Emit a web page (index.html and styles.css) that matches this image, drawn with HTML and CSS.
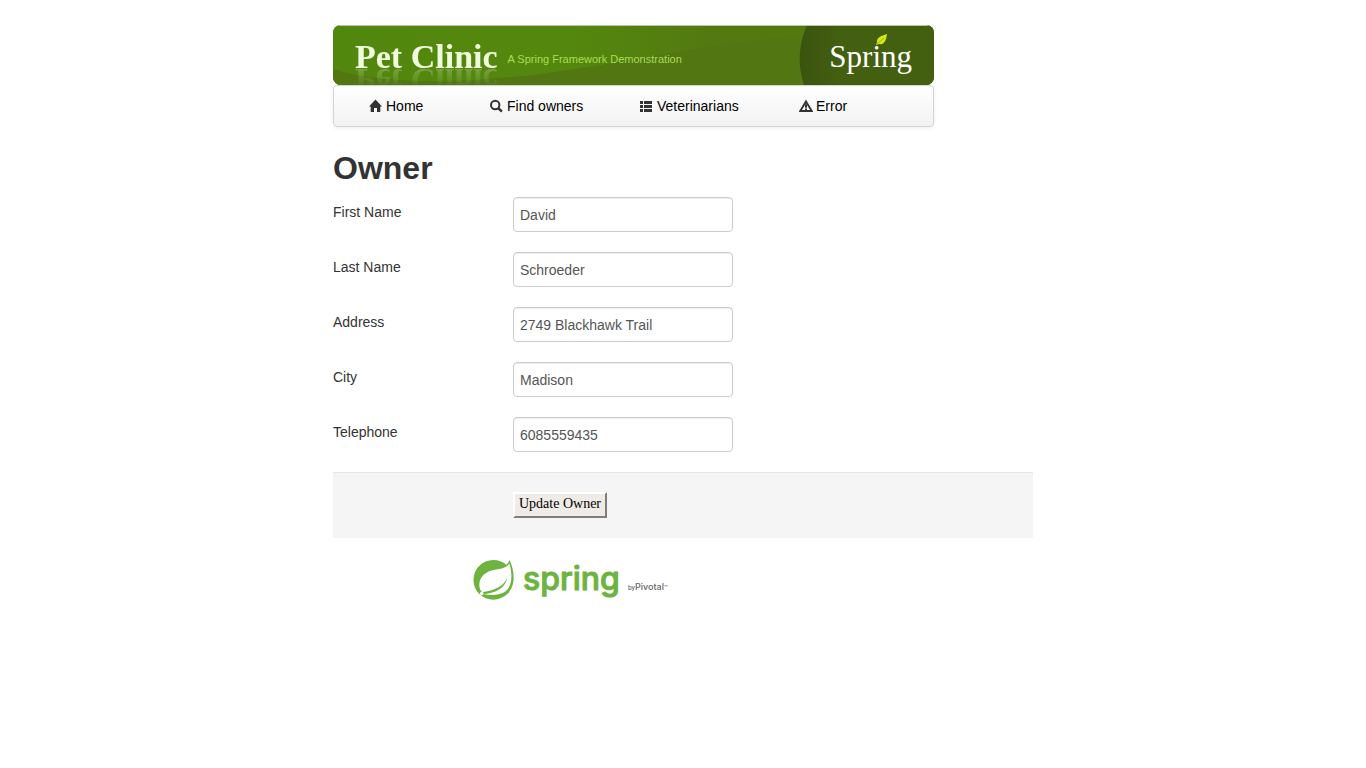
FILE: index.html
```html
<!DOCTYPE html>
<html lang="en">
<head>
<meta charset="utf-8">
<meta name="viewport" content="width=device-width, initial-scale=1">
<title>PetClinic :: a Spring Framework demonstration</title>
<link rel="stylesheet" href="styles.css">
</head>
<body>
<div class="container">
  <header class="masthead">
    <div class="banner">
      <svg class="banner-art" viewBox="0 0 601 60" preserveAspectRatio="none" aria-hidden="true">
        <defs>
          <linearGradient id="base" x1="0" y1="0" x2="1" y2="0">
            <stop offset="0" stop-color="#52870d"/><stop offset=".4" stop-color="#54870e"/><stop offset=".62" stop-color="#537a11"/><stop offset="1" stop-color="#537a11"/>
          </linearGradient>
          <linearGradient id="disc" x1="0" y1="0" x2="1" y2="0">
            <stop offset="0" stop-color="#3a540e"/><stop offset=".3" stop-color="#435f10"/><stop offset="1" stop-color="#435f10"/>
          </linearGradient>
        </defs>
        <rect width="601" height="60" fill="url(#base)"/>
        <path d="M0 44C50 60 130 58 200 50C300 37 380 18 467 11V60H0Z" fill="#517612"/>
        <path d="M474 0Q461 30 471 60H601V0Z" fill="url(#disc)"/>
        <path d="M0 .5H601" stroke="#b9c7a5"/>
      </svg>
      <span class="site-name">Pet Clinic</span>
      <span class="tagline">A Spring Framework Demonstration</span>
      <span class="brand">Spring
        <svg class="brand-leaf" viewBox="0 0 12 12" aria-hidden="true"><path d="M11 0C5 2 1 3 1 8L0 11L3 10C9 11 10 6 11 0Z" fill="#d5e914"/><path d="M1 10L8 4" stroke="#87a80f" stroke-width=".8"/></svg>
      </span>
    </div>
    <nav class="navbar" aria-label="Main">
      <a href="#home"><svg viewBox="0 0 14 14" aria-hidden="true"><path d="M6.5 .5L13 7.4H11.3V13H8V9H5V13H1.7V7.4H0Z"/></svg>Home</a>
      <a href="#find"><svg viewBox="0 0 14 14" aria-hidden="true"><circle cx="5.2" cy="6" r="4.2" fill="none" stroke="#333" stroke-width="2"/><path d="M8.3 9.1L11.9 12.7" stroke="#333" stroke-width="2.5"/></svg>Find owners</a>
      <a href="#vets"><svg viewBox="0 0 14 14" aria-hidden="true"><path d="M0 2H3V5H0ZM4 2H12V5H4ZM0 6H3V9H0ZM4 6H12V9H4ZM0 10H3V13H0ZM4 10H12V13H4Z"/></svg>Veterinarians</a>
      <a href="#error"><svg viewBox="0 0 14 14" aria-hidden="true"><path d="M7 2.4L12.8 12H1.2Z" fill="none" stroke="#333" stroke-width="1.9"/><path d="M6 5.2H8V8.8H6ZM6 9.6H8V11.2H6Z"/></svg>Error</a>
    </nav>
  </header>
  <main>
    <h1>Owner</h1>
    <form>
      <div class="field"><label for="first">First Name</label><input id="first" type="text" value="David"></div>
      <div class="field"><label for="last">Last Name</label><input id="last" type="text" value="Schroeder"></div>
      <div class="field"><label for="address">Address</label><input id="address" type="text" value="2749 Blackhawk Trail"></div>
      <div class="field"><label for="city">City</label><input id="city" type="text" value="Madison"></div>
      <div class="field"><label for="phone">Telephone</label><input id="phone" type="text" value="6085559435"></div>
      <div class="actions"><button type="button">Update Owner</button></div>
    </form>
  </main>
  <footer class="footer">
    <svg class="spring-mark" viewBox="0 0 42 42" aria-hidden="true">
      <path d="M36.6 1C35.8 2.7 34.8 4.3 33.6 5.7C25.6-.9 13.2-.7 5.8 7.3C-1.6 15.3-1.1 28 6.3 35C14.2 42.8 27 42.3 34.6 34.8C43.2 26.2 41.5 12 36.6 1Z" fill="#6db33f"/>
      <path d="M36.3 4.4C32.7 9.8 27 9.6 21.5 10.7C13.4 12.2 6.2 17.2 6.3 26C6.4 29.3 7.3 31.5 9.2 33.3C19.3 31.6 30.3 28.3 34.1 19C32.7 28.9 22.5 34 11 35.2C18.6 36.7 27.6 36.1 32.6 32.2C40 26.6 39.2 13.5 36.3 4.4Z" fill="#fff"/>
      <circle cx="8.7" cy="34.6" r="1.8" fill="#fff"/>
    </svg>
    <span class="spring-word">spring</span>
    <span class="pivotal"><small>by</small>Pivotal<small>™</small></span>
  </footer>
</div>
</body>
</html>
```
FILE: styles.css
```css
* { box-sizing: border-box; }
body {
  margin: 0;
  background: #fff;
  color: #333;
  font: 14px/20px "Liberation Sans", Arial, sans-serif;
}
.container { max-width: 700px; margin: 0 auto; padding-top: 25px; }
.masthead { max-width: 601px; }

.banner {
  position: relative;
  display: flex;
  align-items: center;
  height: 60px;
  padding: 4px 22px 0;
  overflow: hidden;
  border-radius: 8px;
  background: #537a11;
  white-space: nowrap;
}
.banner-art { position: absolute; inset: 0; width: 100%; height: 100%; }
.site-name, .tagline, .brand { position: relative; }
.site-name {
  font: bold 34px/40px "Liberation Serif", serif;
  color: #effbdc;
  -webkit-box-reflect: below -17px linear-gradient(transparent 30%, rgba(0, 0, 0, .35));
}
.tagline { margin: 4px 0 0 10px; font-size: 11px; line-height: 16px; color: #a9dd52; }
.brand { margin-left: auto; font: 31px/40px "Liberation Serif", serif; color: #fff; }
.brand-leaf { position: absolute; top: -3px; left: 47px; width: 12px; height: 12px; }

.navbar {
  display: grid;
  grid-template-columns: 121px 150px 159px auto;
  height: 42px;
  padding: 10px 35px;
  border: 1px solid #d4d4d4;
  border-radius: 4px;
  background: linear-gradient(#fff, #f2f2f2);
  box-shadow: 0 1px 4px rgba(0, 0, 0, .065);
}
.navbar a { display: flex; align-items: center; gap: 3px; color: #000; text-decoration: none; }
.navbar svg { width: 14px; height: 14px; fill: #333; }

h1 { margin: 21px 0 9px; font-size: 32px; line-height: 40px; }
form { margin: 0; }
.field { display: flex; align-items: flex-start; margin-bottom: 20px; }
.field label { width: 180px; padding-top: 5px; }
.field input {
  width: 220px;
  height: 35px;
  padding: 4px 6px;
  border: 1px solid #ccc;
  border-radius: 4px;
  background: #fff;
  box-shadow: inset 0 1px 1px rgba(0, 0, 0, .075);
  color: #555;
  font: inherit;
}
.actions { padding: 19px 0 20px 180px; border-top: 1px solid #e5e5e5; background: #f5f5f5; }
.actions button {
  display: block;
  height: 26px;
  padding: 0 4px 2px;
  border: 2px solid;
  border-color: #fff #807c78 #807c78 #fff;
  background: #efebe7;
  color: #000;
  font: 14px/20px "Liberation Serif", serif;
}

.footer { display: flex; align-items: center; margin-top: 21px; padding-left: 140px; }
.spring-mark { width: 42px; height: 42px; }
.spring-word {
  margin: 0 8px;
  padding-bottom: 2px;
  color: #6db33f;
  font: 500 32px/40px Inter, sans-serif;
  -webkit-text-stroke: 1px #6db33f;
}
.pivotal { padding-top: 14px; color: #666; font: 500 9px/12px Inter, sans-serif; }
.pivotal small { font-size: 6px; }
```
